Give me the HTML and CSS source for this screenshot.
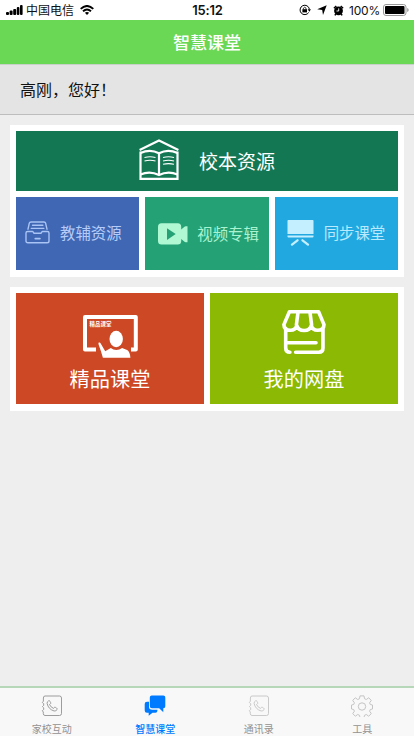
FILE: index.html
```html
<!DOCTYPE html>
<html lang="zh-CN">
<head>
<meta charset="utf-8">
<meta name="viewport" content="width=device-width, initial-scale=1">
<title>智慧课堂</title>
<link rel="stylesheet" href="styles.css">
</head>
<body>
<div class="app">
  <header class="status">
    <div class="status-left">
      <svg class="signal" viewBox="0 0 17 10"><rect x="0" y="7" width="3" height="3" rx="1"/><rect x="3.6" y="5.5" width="3" height="4.5" rx="1"/><rect x="7.2" y="4" width="3" height="6" rx="1"/><rect x="10.8" y="2" width="2.6" height="8" rx="1"/><rect x="14" y="0" width="2.6" height="10" rx="1"/></svg>
      <span class="carrier">中国电信</span>
      <svg class="wifi" viewBox="0 0 14 10"><g fill="none" stroke="#000" stroke-width="1.9"><path d="M.7 3.9Q7-2 13.3 3.9"/><path d="M3 6.3Q7 2.5 11 6.3"/></g><path d="M4.9 7.8Q7 6 9.1 7.8L7 10Z"/></svg>
    </div>
    <time class="clock">15:12</time>
    <div class="status-right">
      <svg class="lock" viewBox="0 0 12 12"><path d="M9.7 8.5A4.7 4.7 0 1 1 10.4 5.2" fill="none" stroke="#000"/><path d="M8.7 5.3h3.2l-1.5 2.5z"/><rect x="3.4" y="5.2" width="4.6" height="3.2"/><path d="M4.4 5.4V4.2q1.3-2 2.6 0v1.2" fill="none" stroke="#000" stroke-width=".8"/></svg>
      <svg class="arrow" viewBox="0 0 10 10"><path d="M9.7.2 6 9.900 5.200 5.100.2 4.300Z"/></svg>
      <svg class="alarm" viewBox="0 0 11 11"><circle cx="5.5" cy="5.8" r="4.4"/><path d="M.9 3.200 3.300 1M7.700 1l2.400 2.200M2.800 9l-.9 1.400M8.200 9l.9 1.400" stroke="#000" stroke-width="1.5"/><path d="M5.700 3.400V6H3.500" fill="none" stroke="#fff" stroke-width=".9"/></svg>
      <span class="percent">100%</span>
      <svg class="battery" viewBox="0 0 26 12"><rect x=".5" y=".5" width="22.5" height="11" rx="2.5" fill="#fff" stroke="#999"/><rect x="2" y="2" width="19.5" height="8" rx="1"/><path d="M24.2 4v4q1.500-.6 1.500-2T24.200 4" fill="#999"/></svg>
    </div>
  </header>
  <h1 class="navbar">智慧课堂</h1>
  <p class="greeting">高刚，您好！</p>
  <main class="content">
    <section class="card">
      <a class="tile school">
        <svg class="book" viewBox="0 0 40 42" fill="none" stroke="#fff"><path d="M.6 11 20 1.500 39.400 11" stroke-width="2.2"/><path d="M1.500 12.500V39.800h37V12.500" stroke-width="2.2"/><path d="M1.500 14Q11 9.500 20 14.200 29 9.500 38.500 14M1.500 35.400Q11 31.500 20 36 29 31.500 38.500 35.400" stroke-width="2.2"/><path d="M20 14v21.500" stroke-width="2.2"/><path d="M5.500 18.500q5.500-1.400 11 0M5.500 22q5.500-1.400 11 0M24 18.500q5.500-1.400 11 0M24 22q5.500-1.400 11 0M24 25.300q5.500-1.400 11 0" stroke-width="1.1"/></svg>
        <span>校本资源</span>
      </a>
      <div class="trio">
        <a class="tile teach">
          <svg class="drawer" viewBox="0 0 25 23" fill="none" stroke="#a9c4f5" stroke-width="1.4" stroke-linecap="round"><path d="M3 8.200 4.300 2.200Q4.600 1 6 1h13q1.300 0 1.600 1.200L22 8.200M7.500 4.200h10.400M6.300 7.400h12.500M2.500 10.500H7.500q.4 0 .8.7l.7 1.100h7l.7-1.100q.4-.7.8-.7h5q1.500 0 1.500 1.500v8q0 1.800-1.800 1.800H2.800Q1 21.800 1 20v-8q0-1.500 1.500-1.500"/><path d="M10.300 17.600h4.600" stroke-width="1.800"/></svg>
          <span>教辅资源</span>
        </a>
        <a class="tile video">
          <svg class="camera" viewBox="0 0 30 22"><path d="M3.500.3h16.200Q23.200.3 23.200 4v2.600l3-2.600q.6-.7 1.500-.7h1.800v16h-1.800q-.9 0-1.500-.7l-3-2.600v2q0 3.500-3.500 3.500H3.500Q0 21.500 0 18V4Q0 .3 3.500.3Z" fill="#b0f8d3"/><path d="M9 5.200 17.700 11 9 17Z" fill="#25a176"/></svg>
          <span>视频专辑</span>
        </a>
        <a class="tile sync">
          <svg class="easel" viewBox="0 0 27 26" fill="#c4efff"><path d="M1.300 0h24.400q.8 0 .8.8V14H.5V.8Q.5 0 1.300 0ZM.5 15.500h26v1.100q0 .9-.9.9H1.400q-.9 0-.9-.9Z"/><path d="m10.500 20.300-5.500 4.300M15.500 20.300l5.500 4.300" stroke="#c4efff" stroke-width="2.3" stroke-linecap="round"/></svg>
          <span>同步课堂</span>
        </a>
      </div>
    </section>
    <section class="card duo">
      <a class="tile big premium">
        <span class="board"><svg viewBox="0 0 55 43"><path d="M13 34.400H2V2h50.800v32.400H48" fill="none" stroke="#fff" stroke-width="4" stroke-linejoin="round"/><g fill="#fff"><ellipse cx="33.2" cy="24" rx="6.7" ry="8.2"/><path d="M15.700 27.600q1.300-.5 2 .8l4.500 7.800 5.600-3.200q2.400 2 5.500 2t5.800-2.100l5 2.200q2.800 1.600 3.300 7.600H19.900q-1.600-6-4.300-13.300-.3-1.300.1-1.800Z"/></g></svg><small>精品课堂</small></span>
        <span>精品课堂</span>
      </a>
      <a class="tile big disk">
        <svg class="shop" viewBox="0 0 44 44" fill="none" stroke="#fff" stroke-width="3.6" stroke-linecap="round" stroke-linejoin="round"><path d="M7.400 1.800h29.200L42 14.600q-.1 5.700-6.500 5.700-5 0-6.200-4.800-1.200 5-7.200 5t-7.300-5q-1.200 4.800-6.400 4.800-6.400 0-6.500-5.700ZM16 2.200l-1.600 12.700M28 2.200l1.600 12.700M3.700 18.300V38q0 4.200 4.200 4.200M4.200 32.800H34M41 18.300V38q0 4.200-4.200 4.200H13.600"/></svg>
        <span>我的网盘</span>
      </a>
    </section>
  </main>
  <nav class="tabs">
    <a class="tab"><svg class="phone" viewBox="0 0 22 22" fill="none" stroke="currentColor"><path d="M4 1h14.500q2 0 2 2v15.500q0 2-2 2H4q-1.700 0-1.700-2v-1.500l-1-1.300 1.400-1.200v-1.700l-1.300-1.200 1.300-1.300V8.700L1.300 7.500l1.100-1.300V3Q2.400 1 4 1Z"/><path d="M7.600 5.800Q6 6.600 6.100 8.400q1.200 5.800 7 7.600 2 .2 3-1.500.4-.8-.5-1.400l-1.300-.8q-.7-.3-1.200.4l-.5.7q-2.900-1.100-4.100-3.900l.9-.6q.6-.5.300-1.200l-.7-1.400q-.5-.9-1.400-.5Z"/></svg><span>家校互动</span></a>
    <a class="tab active"><svg class="chat" viewBox="0 0 22 22" fill="#007aff"><path d="M3 6.700h2V11.500q0 3.200 3.200 3.200h5.200v1.100q0 2-2 2H8.500l-3.800 3v-3H3q-2.300 0-2.300-2.300V9Q.7 6.700 3 6.700Z"/><path d="M7.800.5h11.500q2 0 2 2v8.700q0 2-2 2v4l-4.100-4H8q-2.200 0-2.200-2.200V2.500q0-2 2-2Z"/></svg><span>智慧课堂</span></a>
    <a class="tab pale"><svg class="phone" viewBox="0 0 22 22" fill="none" stroke="currentColor"><path d="M4 1h14.500q2 0 2 2v15.500q0 2-2 2H4q-1.700 0-1.700-2v-1.500l-1-1.300 1.400-1.200v-1.700l-1.300-1.200 1.300-1.300V8.700L1.300 7.500l1.100-1.300V3Q2.400 1 4 1Z"/><path d="M7.600 5.800Q6 6.600 6.100 8.400q1.200 5.800 7 7.600 2 .2 3-1.500.4-.8-.5-1.400l-1.300-.8q-.7-.3-1.200.4l-.5.7q-2.900-1.100-4.100-3.900l.9-.6q.6-.5.300-1.200l-.7-1.400q-.5-.9-1.400-.5Z"/></svg><span>通讯录</span></a>
    <a class="tab pale"><svg class="gear" viewBox="0 0 22 22" fill="none" stroke="currentColor" stroke-linejoin="round"><path d="M9 .9h4l.5 2.800 1.800.8 2.400-1.700 2.600 2.600-1.700 2.400.7 1.700 2.200.5v4l-2.200.5-.7 1.700 1.700 2.400-2.600 2.600-2.400-1.700-1.800.8-.5 2.200H9l-.5-2.200-1.800-.8-2.400 1.700-2.600-2.600 1.700-2.400-.7-1.700L.5 14V10l2.200-.5.7-1.700-1.700-2.400 2.600-2.600 2.400 1.700 1.800-.8Z"/><circle cx="11" cy="11.5" r="3.700"/></svg><span>工具</span></a>
  </nav>
</div>
</body>
</html>
```
FILE: styles.css
```css
* { box-sizing: border-box; }
body {
  margin: 0;
  background: #eee;
  font-family: "Liberation Sans", "Noto Sans CJK SC", sans-serif;
}
svg { display: block; flex: none; }
.app { height: 736px; display: flex; flex-direction: column; overflow: hidden; }

.status {
  height: 20px;
  flex: none;
  display: grid;
  grid-template-columns: 1fr auto 1fr;
  align-items: center;
  padding: 0 5px 0 6px;
  background: #fff;
  color: #111;
  font: 12px/20px Inter, "Noto Sans CJK SC", sans-serif;
}
.status-left, .status-right { display: flex; align-items: center; }
.status-right { justify-content: flex-end; }
.signal { width: 17px; height: 10px; }
.carrier { margin: 0 6px 0 3px; padding-top: 2px; line-height: 18px; }
.wifi { width: 14px; height: 10px; }
.clock { font-weight: 600; font-size: 13px; letter-spacing: -.2px; padding-top: 1px; line-height: 19px; }
.lock { width: 12px; height: 12px; margin-right: 6px; }
.arrow { width: 10px; height: 10px; margin-right: 6px; }
.alarm { width: 11px; height: 11px; margin-right: 5px; }
.percent { width: 31px; margin-right: 3px; padding-top: 2px; line-height: 18px; letter-spacing: -.2px; white-space: nowrap; }
.battery { width: 26px; height: 12px; }

.navbar {
  height: 44px;
  flex: none;
  margin: 0;
  background: #6ad755;
  color: #fff;
  text-align: center;
  font-size: 17px;
  font-weight: 500;
  line-height: 47px;
}
.greeting {
  height: 51px;
  flex: none;
  margin: 0;
  padding-left: 20px;
  background: #e4e4e4;
  border-top: 1px solid #c9d0c9;
  border-bottom: 1px solid #bdbdbd;
  color: #111;
  font-size: 16px;
  line-height: 51px;
}

.content { flex: 1; padding: 10px; display: flex; flex-direction: column; gap: 10px; }
.card { background: #fff; padding: 6px; }
.tile { display: flex; align-items: center; white-space: nowrap; }
.school {
  height: 60px;
  padding-left: 123px;
  gap: 20px;
  background: #147754;
  color: #fff;
  font-size: 19px;
}
.book { width: 40px; height: 42px; margin-top: -2px; }
.school span { padding-bottom: 2px; }
.trio {
  display: grid;
  grid-template-columns: repeat(3, 1fr);
  gap: 6px;
  margin-top: 6px;
  padding-bottom: 1px;
}
.trio .tile { height: 73px; font-size: 15.4px; }
.trio span { padding-bottom: 2px; }
.teach { padding-left: 9px; gap: 10px; background: #3f67b3; color: #b5ccfa; }
.trio .teach span { padding-bottom: 4px; }
.trio .sync span { padding-bottom: 3px; }
.drawer { width: 25px; height: 23px; margin-top: -3px; }
.video { padding-left: 13px; gap: 9px; background: #25a176; color: #aaf3d0; }
.camera { width: 30px; height: 22px; }
.sync { padding-left: 12px; gap: 10px; background: #22a8e0; color: #b9eaff; }
.easel { width: 27px; height: 26px; margin-top: -1px; }

.duo { display: grid; grid-template-columns: 1fr 1fr; gap: 6px; padding-bottom: 7px; }
.big {
  height: 111px;
  flex-direction: column;
  color: #fff;
  font-size: 20.2px;
  line-height: 30px;
}
.premium { background: #cd4824; padding-top: 22px; gap: 7px; }
.disk { background: #8bb904; padding-top: 17px; gap: 11px; }
.board { position: relative; width: 55px; height: 43px; }
.board svg { width: 55px; height: 43px; }
.board small {
  position: absolute;
  left: 7px;
  top: 5px;
  font-size: 5.5px;
  font-weight: 700;
  line-height: 8px;
}
.shop { width: 44px; height: 44px; }

.tabs {
  height: 50px;
  flex: none;
  display: grid;
  grid-template-columns: repeat(4, 1fr);
  background: #f8f8f8;
  border-top: 2px solid #b7d7b9;
}
.tab {
  display: flex;
  flex-direction: column;
  align-items: center;
  padding-top: 7px;
  gap: 5px;
  color: #929292;
  font-size: 10px;
  line-height: 16px;
}
.tab svg { width: 22px; height: 22px; }
.phone { stroke-width: .9; }
.pale svg { color: #c4c4c4; }
.active { color: #007aff; font-weight: 500; }
```
